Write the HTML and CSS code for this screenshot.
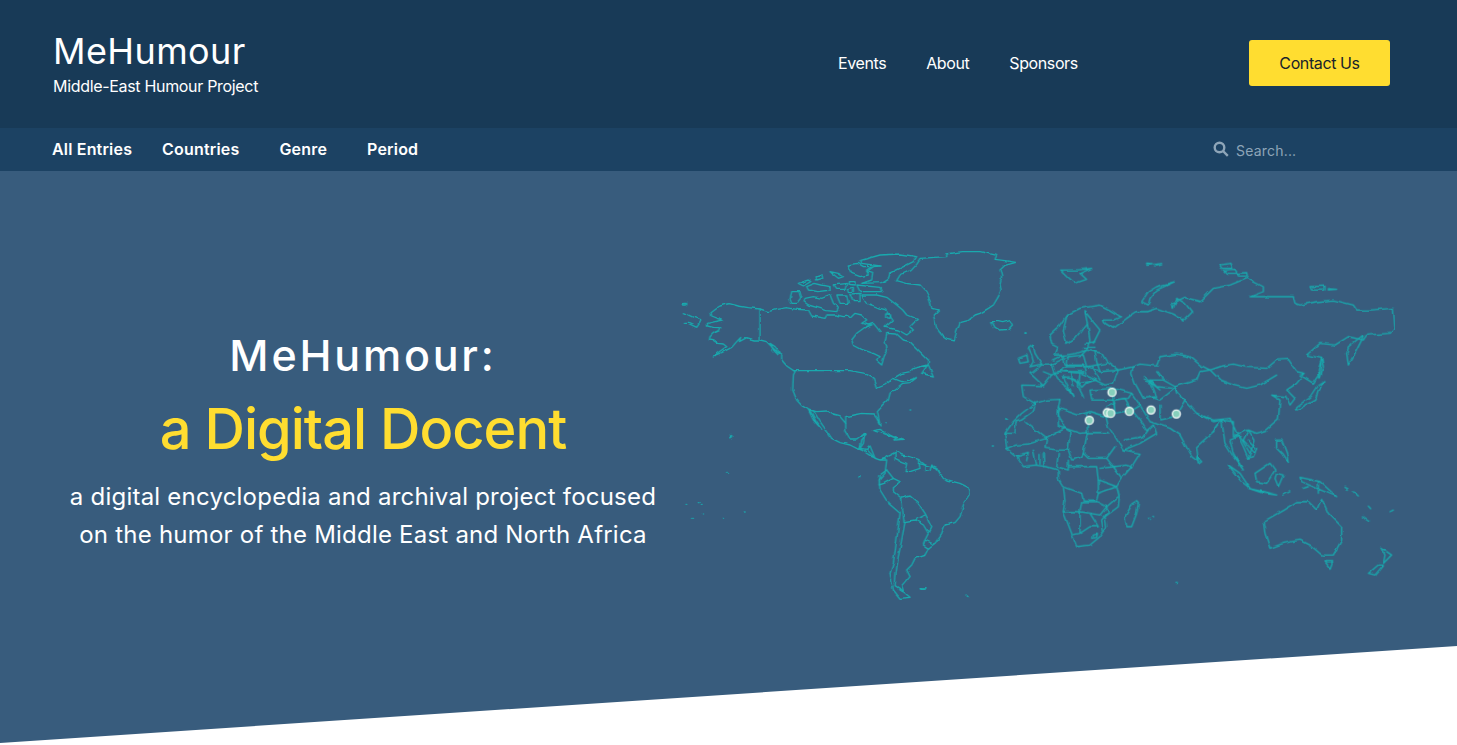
FILE: index.html
```html
<!DOCTYPE html>
<html lang="en">
<head>
    <meta charset="UTF-8">
    <title>MeHumour</title>
    <link rel="stylesheet" href="styles.css">
</head>
<body>
    <header class="topbar">
        <div class="brand">
            <div class="brand-name">MeHumour</div>
            <div class="brand-sub">Middle-East Humour Project</div>
        </div>
        <nav class="topnav">
            <a href="#">Events</a>
            <a href="#">About</a>
            <a href="#">Sponsors</a>
        </nav>
        <a class="contact" href="#">Contact Us</a>
    </header>

    <div class="subbar">
        <nav class="subnav">
            <a class="entries" href="#">All Entries</a>
            <a class="countries" href="#">Countries</a>
            <a class="genre" href="#">Genre</a>
            <a href="#">Period</a>
        </nav>
        <form class="search">
            <svg class="search-icon" viewBox="0 0 16 16"><circle cx="6.5" cy="6.5" r="4.8"/><path d="M10 10l4.8 4.8"/></svg>
            <input type="text" placeholder="Search...">
        </form>
    </div>

    <section class="hero">
        <div class="hero-text">
            <h2>MeHumour:</h2>
            <h1>a Digital Docent</h1>
            <p>a digital encyclopedia and archival project focused<br>on the humor of the Middle East and North Africa</p>
        </div>
        <svg class="map" viewBox="0 0 2145 1110">
            <defs>
                <filter id="rough" filterUnits="userSpaceOnUse" x="0" y="0" width="2145" height="1110" color-interpolation-filters="sRGB">
                    <feTurbulence type="fractalNoise" baseFrequency="0.035" numOctaves="2" seed="4"/>
                    <feDisplacementMap in="SourceGraphic" scale="11" xChannelSelector="R" yChannelSelector="G"/>
                </filter>
            </defs>
            <g filter="url(#rough)">
            <!-- americas -->
            <g class="land">
                <path d="M800 42 850 35 900 35 925 40 950 46 945 58 975 62 1008 67 975 76 960 90 965 110 960 130 963 150 955 170 940 195 925 205 900 220 885 225 860 245 840 250 830 275 822 300 800 295 785 285 770 265 760 225 775 210 755 205 750 180 738 155 720 135 680 130 650 122 660 105 690 92 710 70 720 55 765 52 800 50Z"/>
                <path d="M540 62 600 45 660 42 710 50 700 65 660 85 630 100 625 115 605 128 545 130 575 120 578 100 560 95 580 80 600 78 545 70Z"/>
                <path d="M505 75 535 70 550 80 575 80 560 90 565 105 540 110 515 100 505 85Z"/>
                <path d="M408 108 425 102 428 115 410 120Z"/>
                <path d="M450 95 475 100 490 110 475 115Z"/>
                <path d="M355 130 385 120 392 125 370 138Z"/>
                <path d="M380 140 405 130 425 135 450 140 450 150 410 155 385 150Z"/>
                <path d="M460 135 500 130 495 148 470 148Z"/>
                <path d="M505 125 525 125 525 135 505 133Z"/>
                <path d="M505 145 520 142 520 155 508 155Z"/>
                <path d="M530 135 600 142 605 155 540 155Z"/>
                <path d="M375 175 400 170 425 175 450 165 460 190 475 205 470 215 440 212 420 205 385 195 372 185Z"/>
                <path d="M335 155 360 155 365 170 350 190 335 190 330 178Z"/>
                <path d="M470 165 500 165 505 190 480 190Z"/>
                <path d="M510 162 540 160 540 185 520 185Z"/>
                <path d="M545 165 590 165 620 172 650 195 668 210 680 225 712 238 690 260 700 270 680 285 655 270 615 262 640 240 620 210 600 205 575 195 560 190Z"/>
                <path d="M620 222 632 222 630 235 620 233Z"/>
                <path d="M935 245 955 245 968 248 990 242 997 255 985 268 960 270 945 262Z"/>
                <path d="M240 207 205 203 175 198 148 191 120 198 105 207 90 218 92 228 110 235 127 240 105 245 82 250 82 258 100 262 122 263 118 272 100 280 90 290 88 300 100 302 112 310 130 312 140 320 125 330 100 348 125 338 155 322 170 305 182 292 178 305 200 293 225 300 240 300 260 305 275 320 290 335 305 345 305 360 320 378 345 395 340 405 338 450 350 480 365 497 382 507 395 520 408 545 425 568 400 540 385 510 410 515 440 513 460 525 480 530 497 550 497 530 520 525 545 520 580 522 590 535 600 555 595 530 592 515 610 495 625 480 630 460 650 445 668 430 690 428 712 412 690 420 665 425 640 415 615 435 590 445 580 415 555 400 510 392 345 392"/>
                <path d="M240 207 240 300"/>
                <path d="M240 207 265 215 290 208 320 203 350 208 385 210 395 228 435 235 440 225 470 225 490 230 505 228 510 235 525 220 545 225 560 240 545 250 565 255 580 250 590 262 600 275"/>
                <path d="M575 255 555 262 530 280 515 300 520 315 545 328 580 340 600 350 590 362 605 375 612 350 622 330 615 305 620 280 650 282 670 300 690 305 705 320 730 345 745 360 745 372 725 400 760 408 745 375 700 385 690 395 665 400 640 415"/>
                <path d="M497 550 497 575 510 597 530 597 545 585 560 580 545 600 540 625 560 628 585 655 600 660 615 655 620 650 650 635 665 645 690 650 715 658 735 675 770 685 780 705 800 720 840 730 870 745 870 765 850 795 840 830 825 848 795 855 785 880 765 910 745 925 735 945 705 955 695 975 680 990 690 1010 665 1040 670 1055 690 1072 660 1075 640 1050 630 1000 640 970 650 900 660 820 625 790 600 750 597 720 615 700 620 660 600 660 575 650 545 630 530 625 510 615 480 608 455 595 445 580 420 545 400 512"/>
                <path d="M270 310 285 320 300 340 295 345 280 330Z"/>
                <path d="M10 218 40 232 65 240 50 262 25 250 10 250"/>
                <path d="M10 190 20 190 20 195 10 195Z"/>
                <path d="M578 572 600 568 630 585 650 595 610 580Z"/>
                <path d="M645 590 670 598 645 600Z"/>
                <path d="M645 640 645 655 665 665 680 670 675 695 690 695 720 685 715 660"/>
                <path d="M620 690 600 705 597 735 612 730 640 715 660 725 640 740 640 755 665 775 690 768 715 790 735 820 755 860 745 880 735 900 760 912"/>
                <path d="M620 690 640 715"/>
                <path d="M715 670 735 675 735 695 750 692 755 675 770 690 780 705"/>
                <path d="M665 775 668 815 672 845 705 840 735 825"/>
                <path d="M705 840 730 855 745 880"/>
                <path d="M675 845 665 900 655 950 648 1000 645 1040 668 1055"/>
                <path d="M735 900 730 915 745 925"/>
                <path d="M540 590 555 580 550 610 540 625"/>
                <path d="M560 628 570 618 585 655"/>
                <path d="M720 1045 735 1043 732 1048 722 1048Z"/>
                <path d="M858 1065 864 1070"/>
                <path d="M152 586 158 590 152 594Z"/>
                <path d="M55 788h2M18 793h2M38 835h2M128 835h2M190 813h2M143 697h2M537 710h3M980 537h3M937 618h3M1035 282h3M690 510h2M615 548h3M64 793h2M68 822h2"/>
            </g>
            <!-- europe, africa, asia, oceania -->
            <g class="land" transform="translate(960 0)">
                <path d="M85 325 100 315 105 340 125 372 90 380 100 365 95 345Z"/>
                <path d="M55 355 80 345 85 365 60 370Z"/>
                <path d="M182 90 230 90 275 85 240 100 260 118 225 130 205 112Z"/>
                <path d="M440 72 460 74 440 76ZM465 76 485 74 470 78Z"/>
                <path d="M425 185 445 155 470 140 525 125 470 150 450 175 445 195Z"/>
                <path d="M660 75 690 70 695 85 665 85Z"/>
                <path d="M670 90 705 88 712 100 680 100Z"/>
                <path d="M712 100 740 98 742 108 715 108Z"/>
                <path d="M930 140 975 138 975 150 935 150Z"/>
                <path d="M985 146 1010 148 985 150Z"/>
                <path d="M150 285 175 262 200 225 240 205 300 195 330 210 362 230 340 240 310 240 315 250 340 265 380 235 410 215 440 215 470 205 520 222 550 240 575 215 555 190 530 175 520 205 515 190 555 172 600 185 640 145 690 135 740 115 790 140 790 155 750 170 820 170 880 170 885 190 900 195 950 185 1000 180 1060 195 1070 210 1110 210 1180 205 1185 265 1170 280 1100 285 1090 300 1045 290 1005 315 960 310 920 345 965 355 960 400 940 430 900 405 915 400 890 430 860 450 885 475 870 495 858 470 815 465 840 480 835 540 800 570 770 580 745 570 765 600 745 655 730 620 715 590 690 600 700 640 730 690 700 650 675 610 665 540 640 575 590 620 595 665 575 650 540 585 510 565 480 555 450 545 420 495 395 510 420 540 440 572 460 555 470 580 420 610 370 630 345 590 325 560 318 530"/>
                <path d="M150 285 155 310 175 320 165 345 195 345 230 340 260 330 285 335 305 340 320 365 355 390 340 430 315 435 285 420 260 430 245 445 225 415 190 410 220 470 190 430 170 415 160 395 155 375 125 375 100 395 90 400 130 437 65 435 70 470 105 490 65 520 40 545 15 580 20 625 50 650 70 680 105 675 140 680 175 690 175 715 190 740 195 780 190 815 215 880 230 920 270 915 300 890 320 860 315 830 355 800 358 770 350 740 365 715 395 680 420 640 370 630"/>
                <path d="M105 490 140 480 180 478 175 505 235 525 270 515 318 530"/>
                <path d="M270 450 340 445 395 460 385 475 340 480 275 480 270 450"/>
                <path d="M200 230 190 270 200 310 225 295 262 250 255 215 300 270 280 310"/>
                <path d="M150 375 205 350 250 345 260 380 320 370"/>
                <path d="M155 405 200 380 260 380 300 395 355 390"/>
                <path d="M195 395 245 400 290 420 240 430 205 410"/>
                <path d="M240 400 235 440 250 470"/>
                <path d="M205 350 200 380M130 395 155 405 130 437"/>
                <path d="M260 330 245 345M285 335 290 365 300 395"/>
                <path d="M190 345 195 375 250 375M160 360 190 345M170 395 250 395M215 400 220 440M250 375 258 400M275 380 300 420M262 250 270 300 260 330M255 310 285 305M250 322 285 322"/>
                <path d="M105 490 100 515 65 540 48 545 45 580 15 580"/>
                <path d="M75 545 140 595 195 565 175 520 180 505"/>
                <path d="M85 612 140 595 135 625 175 630 205 630 210 575 195 565"/>
                <path d="M85 612 45 615 20 625"/>
                <path d="M175 505 175 560 195 565 240 580 262 578 262 520"/>
                <path d="M262 578 325 578"/>
                <path d="M262 578 250 640 265 655 320 655 345 620"/>
                <path d="M205 630 215 660 245 650 250 640"/>
                <path d="M175 640 170 680 205 690 205 660"/>
                <path d="M100 630 110 675M120 640 120 672M130 640 132 680M85 640 80 665M50 650 85 640"/>
                <path d="M320 655 340 680 380 675 395 680M340 680 362 710"/>
                <path d="M300 685 345 680M295 720 350 740"/>
                <path d="M205 680 255 680 290 680 295 720 295 760 290 780 250 780 245 760 195 742"/>
                <path d="M190 815 240 815 245 785M240 815 240 880 215 885M240 815 270 820 295 860 270 860 240 880"/>
                <path d="M245 785 290 785 320 800 300 825 270 820M320 800 325 815 305 840 310 870M295 760 350 740M320 800 355 770"/>
                <path d="M280 885 292 882 290 892 278 895Z"/>
                <path d="M410 785 395 795 375 830 380 860 395 860 410 820 415 790Z"/>
                <path d="M340 445 345 520 395 510M340 480 345 520 318 530M370 600 430 590 445 570M340 480 375 475 395 510M320 500 345 490"/>
                <path d="M400 380 420 372 470 378 480 350 530 342 570 350 600 375 630 390 660 380 700 372 740 382 800 385 830 360 865 358 890 395 915 400"/>
                <path d="M630 390 660 420 700 435 740 445 780 435 830 405"/>
                <path d="M355 390 400 380 395 400 405 430 430 475 470 470 450 420 490 420 525 440 590 420 600 395 630 390"/>
                <path d="M395 460 420 495M480 495 480 540M450 470 480 480 525 445 545 470 590 520 640 540 690 535M545 470 555 480 525 530 480 540"/>
                <path d="M430 410 470 440 520 445M470 440 450 420M490 420 470 395M525 440 530 460M430 420 455 430 480 450"/>
                <path d="M590 520 640 545 665 540 640 575M665 540 700 545 700 590 720 590M690 535 715 590M745 570 730 600 765 640M700 590 740 570M720 590 750 640M745 600 770 625 760 650 740 655"/>
                <path d="M590 650 605 665 595 672Z"/>
                <path d="M965 355 970 380 960 415 955 390Z"/>
                <path d="M890 510 945 480 955 450 975 425 950 440 930 470 890 500Z"/>
                <path d="M1045 320 1090 285 1085 300 1065 340 1045 375 1040 340Z"/>
                <path d="M830 600 845 600 860 640 865 670 845 640 830 625Z"/>
                <path d="M765 700 810 670 825 690 800 730 770 725Z"/>
                <path d="M685 675 720 700 750 745 725 725Z"/>
                <path d="M745 745 790 755 830 765 790 760Z"/>
                <path d="M830 700 850 705 835 740 825 715Z"/>
                <path d="M900 712 960 725 1010 770 950 745 905 725ZM955 725 955 760"/>
                <path d="M790 845 850 810 890 785 925 785 950 810 965 775 985 820 1025 860 1025 900 1000 945 965 945 930 915 900 900 850 910 810 925 795 880Z"/>
                <path d="M975 965 998 965 990 985Z"/>
                <path d="M1145 925 1175 945 1150 970 1155 945Z"/>
                <path d="M1105 1000 1135 975 1150 975 1125 1005Z"/>
                <path d="M1090 830 1108 842M1060 755 1075 768M1105 798 1112 806M1170 815 1180 810"/>
                <path d="M850 765 870 755M910 745 925 740M1035 742 1045 748"/>
                <path d="M75 282h3M445 835h3M458 830h3M528 1027h4M17 537h3"/>
            </g>
            </g>
            <g class="pins" transform="translate(960 0)">
                <circle cx="336" cy="457" r="12"/>
                <circle cx="322" cy="518" r="12"/>
                <circle cx="332" cy="520" r="12"/>
                <circle cx="388" cy="514" r="12"/>
                <circle cx="453" cy="510" r="12"/>
                <circle cx="529" cy="522" r="12"/>
                <circle cx="268" cy="541" r="12"/>
            </g>
        </svg>
    </section>
</body>
</html>
```

FILE: styles.css
```css
* {
    box-sizing: border-box;
}
body {
    margin: 0;
    font-family: Inter, "Noto Sans", sans-serif;
    background-color: #ffffff;
    color: #ffffff;
    overflow: hidden;
}
a {
    color: inherit;
    text-decoration: none;
}
.topbar {
    display: flex;
    align-items: center;
    height: 128px;
    padding: 0 67px 0 53px;
    background-color: #183a57;
}
.brand {
    width: 785px;
}
.brand-name {
    font-size: 36px;
    line-height: 42px;
    letter-spacing: 0.4px;
}
.brand-sub {
    font-size: 16px;
    line-height: 24px;
    margin-top: 2px;
    letter-spacing: -0.32px;
}
.topnav {
    display: flex;
    gap: 40px;
    font-size: 16px;
    letter-spacing: -0.4px;
    margin-bottom: 2px;
}
.contact {
    margin-left: auto;
    margin-bottom: 2px;
    width: 141px;
    height: 46px;
    line-height: 46px;
    text-align: center;
    font-size: 16px;
    letter-spacing: -0.4px;
    color: #18232b;
    background-color: #ffdd30;
    border-radius: 3px;
}
.subbar {
    display: flex;
    align-items: center;
    justify-content: space-between;
    height: 43px;
    padding: 0 0 2px 52px;
    background-color: #1c4263;
}
.subnav {
    display: flex;
    font-size: 16px;
    font-weight: 600;
    letter-spacing: 0.18px;
}
.subnav .entries {
    margin-right: 30px;
}
.subnav .countries, .subnav .genre {
    margin-right: 40px;
}
.search {
    display: flex;
    align-items: center;
    width: 244px;
}
.search-icon {
    width: 16px;
    height: 16px;
    fill: none;
    stroke: #8ea5b8;
    stroke-width: 2.4;
    margin-right: 7px;
}
.search input {
    width: 200px;
    border: none;
    background: none;
    padding: 0;
    margin-top: 3px;
    font-family: inherit;
    font-size: 14px;
    letter-spacing: 0.2px;
    color: #ffffff;
    outline: none;
}
.search input::placeholder {
    color: #8ea5b8;
}
.hero {
    display: flex;
    height: 574px;
    padding: 69px 0 0 53px;
    background-color: #385c7d;
    clip-path: polygon(0 0, 100% 0, 100% 475px, 0 572px);
}
.hero-text {
    width: 620px;
    margin-right: 7px;
    padding-top: 90px;
    text-align: center;
}
.hero-text h2 {
    margin: 0;
    font-size: 43px;
    line-height: 50px;
    font-weight: 500;
    letter-spacing: 2.8px;
}
.hero-text h1 {
    margin: 17px 0 0;
    font-size: 56px;
    line-height: 64px;
    font-weight: 450;
    letter-spacing: -1px;
    color: #ffdd30;
}
.hero-text p {
    margin: 17px 0 0;
    font-size: 24px;
    line-height: 38px;
    letter-spacing: 0.22px;
}
.map {
    width: 715px;
    height: 370px;
    flex-shrink: 0;
}
.land path {
    fill: none;
    stroke: #19a9ae;
    stroke-width: 4;
    stroke-linejoin: round;
    stroke-linecap: round;
}
.pins circle {
    fill: #86cfbc;
    stroke: #f2faf8;
    stroke-width: 4;
}
```
